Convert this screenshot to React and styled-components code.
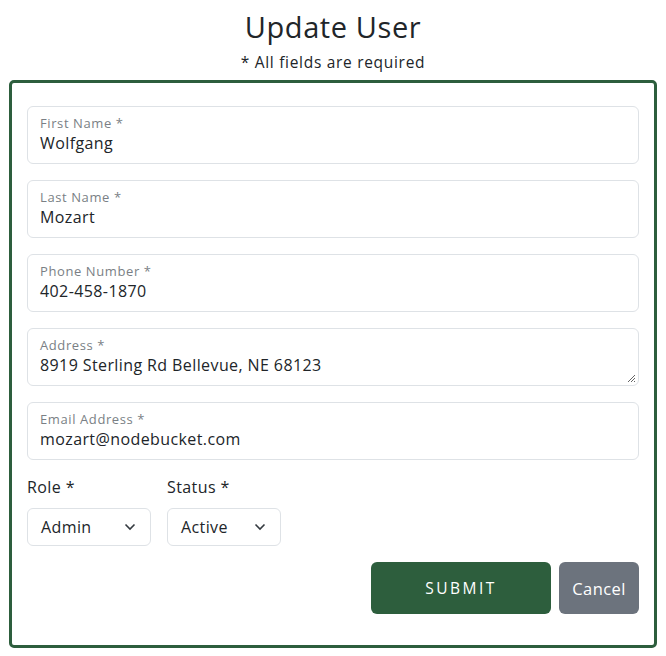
import React from 'react'
import styled, { createGlobalStyle } from 'styled-components'

const Global = createGlobalStyle`
  body {
    margin: 0;
    background: #fff;
    font-family: 'Open Sans', 'Liberation Sans', sans-serif;
    color: #212529;
    letter-spacing: 0.4px;
  }
`

const Page = styled.div`
  width: 666px;
  padding: 8px 9px 0;
  box-sizing: border-box;
`

const Title = styled.h1`
  margin: 0;
  text-align: center;
  font-size: 29px;
  font-weight: 400;
  line-height: 38px;
  letter-spacing: 0.6px;
`

const Subtitle = styled.p`
  margin: 6px 0 8px;
  text-align: center;
  font-size: 15.5px;
  line-height: 20px;
  letter-spacing: 0.7px;
`

const Card = styled.form`
  border: 3px solid #2d5e3d;
  border-radius: 5px;
  padding: 23px 15px 31px;
  display: flex;
  flex-direction: column;
  gap: 16px;
`

const Field = styled.div`
  position: relative;
  height: 58px;
  border: 1px solid #dee2e6;
  border-radius: 6px;
  padding: 8px 12px 0;
  box-sizing: border-box;
  background: #fff;
`

const FieldLabel = styled.div`
  font-size: 13px;
  color: #7a7f85;
  line-height: 17px;
  letter-spacing: 0.6px;
`

const FieldValue = styled.div`
  font-size: 16px;
  line-height: 22px;
  color: #212529;
`

const Grip = styled.svg`
  position: absolute;
  right: 2px;
  bottom: 2px;
`

const Selects = styled.div`
  display: flex;
  gap: 16px;
  margin-top: 1px;
`

const SelectGroup = styled.div`
  display: flex;
  flex-direction: column;
  gap: 11px;
`

const SelectLabel = styled.div`
  font-size: 16px;
  line-height: 20px;
`

const Select = styled.div`
  width: ${p => p.width}px;
  height: 38px;
  box-sizing: border-box;
  border: 1px solid #dee2e6;
  border-radius: 6px;
  display: flex;
  align-items: center;
  justify-content: space-between;
  padding: 0 14px 0 13px;
  font-size: 16px;
`

const Actions = styled.div`
  display: flex;
  justify-content: flex-end;
  gap: 8px;
`

const Button = styled.button`
  height: 52px;
  border: none;
  border-radius: 6px;
  font-family: inherit;
  font-size: ${p => (p.primary ? '15.5px' : '16.5px')};
  letter-spacing: ${p => (p.primary ? '2.5px' : '0.4px')};
  color: #fff;
  background: ${p => (p.primary ? '#2d5e3d' : '#6c737d')};
  width: ${p => p.width}px;
  cursor: pointer;
`

const Chevron = () => (
  <svg width="12" height="8" viewBox="0 0 12 8" fill="none">
    <path d="M1.5 1.5 L6 6 L10.5 1.5" stroke="#343a40" strokeWidth="1.6" />
  </svg>
)

const fields = [
  ['First Name *', 'Wolfgang'],
  ['Last Name *', 'Mozart'],
  ['Phone Number *', '402-458-1870'],
  ['Address *', '8919 Sterling Rd Bellevue, NE 68123', true],
  ['Email Address *', 'mozart@nodebucket.com'],
]

export default () => (
  <Page>
    <Global />
    <Title>Update User</Title>
    <Subtitle>* All fields are required</Subtitle>
    <Card onSubmit={e => e.preventDefault()}>
      {fields.map(([label, value, grip]) => (
        <Field key={label}>
          <FieldLabel>{label}</FieldLabel>
          <FieldValue>{value}</FieldValue>
          {grip && (
            <Grip width="9" height="9" viewBox="0 0 9 9">
              <path d="M8 1 L1 8 M8 4 L4 8 M8 7 L7 8" stroke="#666" strokeWidth="1" />
            </Grip>
          )}
        </Field>
      ))}
      <Selects>
        <SelectGroup>
          <SelectLabel>Role *</SelectLabel>
          <Select width={124}>
            Admin <Chevron />
          </Select>
        </SelectGroup>
        <SelectGroup>
          <SelectLabel>Status *</SelectLabel>
          <Select width={114}>
            Active <Chevron />
          </Select>
        </SelectGroup>
      </Selects>
      <Actions>
        <Button primary width={180}>SUBMIT</Button>
        <Button width={80}>Cancel</Button>
      </Actions>
    </Card>
  </Page>
)
